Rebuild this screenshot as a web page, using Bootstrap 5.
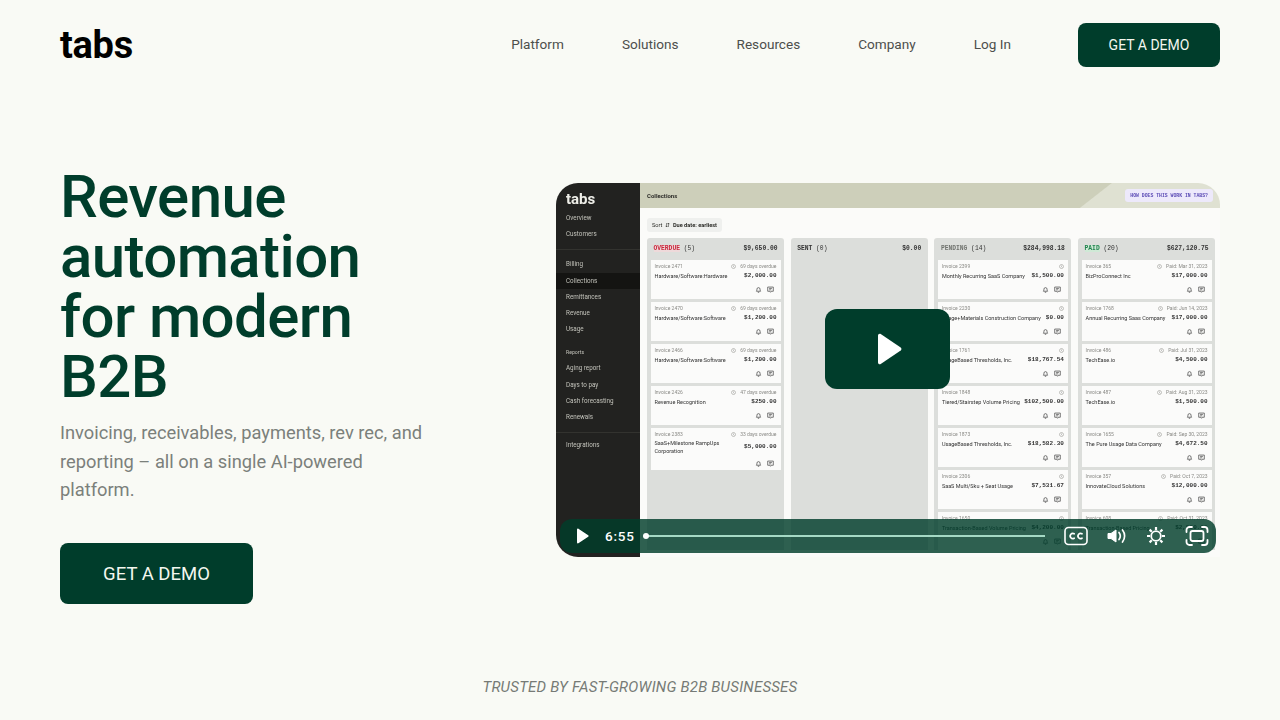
<!DOCTYPE html>
<html lang="en">
  <head>
    <meta charset="UTF-8" />
    <meta name="viewport" content="width=device-width, initial-scale=1.0" />
    <title>Tabs</title>
    <link rel="stylesheet" href="https://cdn.jsdelivr.net/npm/bootstrap@5.3.0/dist/css/bootstrap.min.css" />
    <style>
      body { background: #f9faf5; font-family: Roboto, "Liberation Sans", Arial, sans-serif; overflow: hidden; }
      .site-nav { padding: 23px 60px 0; height: 67px; }
      .site-logo { font: 700 38px/1 Roboto, sans-serif; color: #000; letter-spacing: -0.3px; text-decoration: none; padding: 0; margin: 0; }
      .site-links { gap: 58px; margin-right: 67px; }
      .site-links a { font: 13.6px/1 Roboto, sans-serif; color: #4d4f4c; text-decoration: none; padding: 0; }
      .btn-tabs { background: #003d2b; color: #f4f7ef; border: 0; border-radius: 8px; font-family: Roboto, sans-serif; }
      .btn-tabs:hover { background: #003d2b; color: #f4f7ef; }
      .btn-sm-tabs { width: 142px; height: 44px; font-size: 14px; }
      .btn-lg-tabs { width: 193px; height: 61px; font-size: 18.5px; padding-top: 10px; }
      .hero-wrap { padding: 100px 60px 0; }
      .hero-left { width: 400px; }
      .hero-title { font: 500 60px/60px Roboto, sans-serif; color: #003d2b; margin: 0; letter-spacing: -0.6px; max-width: 340px; }
      .hero-sub { font: 18.3px/28.6px Roboto, sans-serif; color: #7b807b; margin: 12px 0 38px; width: 380px; }
      .trust-line { font: italic 15px/1 Roboto, sans-serif; letter-spacing: 0.22px; color: #767a76; position: absolute; left: 0; right: 0; top: 680px; }

      .vid-frame { position: relative; width: 664px; height: 374px; margin-top: 16px; border-radius: 22px 22px 0 22px; overflow: hidden; background: #fbfbf9; font-family: Roboto, "Liberation Sans", sans-serif; }
      .vid-soft { filter: blur(0.4px); }
      .vid-side { width: 84px; background: #222220; color: #c2c2ba; font-size: 6.3px; flex: none; }
      .vid-logo { font: 700 15px/1 Roboto, sans-serif; color: #eeeee8; padding: 9px 10px 0; height: 27px; }
      .vid-item { height: 16.2px; line-height: 16.2px; padding-left: 10px; }
      .vid-sec { height: 15px; line-height: 15px; font-size: 5.2px; margin-top: 8px; }
      .vid-on { background: #141412; }
      .vid-rule { height: 1px; background: #33332f; margin: 7px 0 6px; }
      .vid-head { height: 25px; background: linear-gradient(142deg, #cdcfba 290px, #dfe1d2 291px); padding: 0 7px; font-size: 6px; font-weight: 700; color: #2c2c28; }
      .vid-help { background: #ede9fb; color: #5b4bb5; font: 700 4.8px/13px "Liberation Mono", monospace; padding: 0 5px; border-radius: 3px; height: 13px; }
      .vid-sort { margin: 10px 0 6px 7px; width: 75px; height: 14px; background: #eff0ee; border-radius: 3px; font-size: 5.6px; line-height: 14px; padding-left: 5px; color: #2c2c28; }
      .vid-board { gap: 6.7px; padding-left: 7px; }
      .vid-col { width: 137px; height: 312px; overflow: hidden; background: #dcdedb; border-radius: 3px 3px 0 0; flex: none; }
      .vid-colhead { height: 22px; padding: 0 6.5px; font: 700 6.3px/22px "Liberation Mono", monospace; color: #333; }
      .vid-colhead span { font-weight: 400; }
      .tag-over { color: #c8273c; background: #eed9da; font-weight: 700 !important; }
      .tag-pend { color: #71746f; font-weight: 700 !important; }
      .tag-paid { color: #23834f; background: #cfe9d6; font-weight: 700 !important; }
      .vid-card { background: #fbfbfa; margin: 0 3.5px 3px; padding: 2px 4px 2px; min-height: 39px; color: #333; }
      .vid-top { font-size: 5px; line-height: 8px; color: #8a8a86; }
      .vid-name { font-size: 5.5px; line-height: 8.4px; }
      .vid-amt { font: 700 6px/8px "Liberation Mono", monospace; white-space: nowrap; flex: none; }
      .vid-mid { min-height: 10px; gap: 3px; margin-top: 1px; }
      .vid-icons { gap: 5px; height: 9px; margin-top: 3.5px; padding-right: 2.5px; }
      .vid-icons svg { width: 7px; height: 7px; }

      .play-big { position: absolute; left: 269px; top: 126px; width: 125px; height: 80px; background: #003d2b; border-radius: 12px; }
      .ctl-bar { position: absolute; left: 4px; top: 336px; width: 656px; height: 34px; background: rgba(0, 61, 43, 0.82); border-radius: 12px; color: #fff; }
      .ctl-time { position: absolute; left: 45px; top: 0; font: 500 13.5px/34px Roboto, sans-serif; letter-spacing: 0.8px; }
      .ctl-track { position: absolute; left: 86px; top: 16px; width: 399px; height: 2px; background: #a5d9c5; }
      .ctl-dot { position: absolute; left: 83px; top: 14px; width: 6px; height: 6px; border-radius: 50%; background: #fff; }
      .ctl-icon { position: absolute; top: 0; height: 34px; }
    </style>
  </head>
  <body>
    <nav class="navbar site-nav d-flex justify-content-between align-items-center">
      <a class="site-logo" href="#">tabs</a>
      <div class="d-flex align-items-center">
        <div class="d-flex align-items-center site-links">
          <a href="#">Platform</a>
          <a href="#">Solutions</a>
          <a href="#">Resources</a>
          <a href="#">Company</a>
          <a href="#">Log In</a>
        </div>
        <a class="btn btn-tabs btn-sm-tabs d-flex align-items-center justify-content-center" href="#">GET A DEMO</a>
      </div>
    </nav>

    <main class="hero-wrap d-flex justify-content-between align-items-start">
      <div class="hero-left">
        <h1 class="hero-title">Revenue automation for modern B2B</h1>
        <p class="hero-sub">Invoicing, receivables, payments, rev rec, and reporting – all on a single AI-powered platform.</p>
        <a class="btn btn-tabs btn-lg-tabs d-flex align-items-center justify-content-center" href="#">GET A DEMO</a>
      </div>

      <div class="vid-frame d-flex">
        <aside class="vid-side vid-soft">
          <div class="vid-logo">tabs</div>
          <div class="vid-item">Overview</div>
          <div class="vid-item">Customers</div>
          <div class="vid-rule"></div>
          <div class="vid-item">Billing</div>
          <div class="vid-item vid-on">Collections</div>
          <div class="vid-item">Remittances</div>
          <div class="vid-item">Revenue</div>
          <div class="vid-item">Usage</div>
          <div class="vid-item vid-sec">Reports</div>
          <div class="vid-item">Aging report</div>
          <div class="vid-item">Days to pay</div>
          <div class="vid-item">Cash forecasting</div>
          <div class="vid-item">Renewals</div>
          <div class="vid-rule mb-1"></div>
          <div class="vid-item">Integrations</div>
        </aside>
        <div class="flex-grow-1 vid-soft">
          <div class="vid-head d-flex justify-content-between align-items-center">
            <span>Collections</span>
            <span class="vid-help">HOW DOES THIS WORK IN TABS?</span>
          </div>
          <div class="vid-sort">Sort &nbsp;⇵&nbsp; <b>Due date: earliest</b></div>
          <div class="vid-board d-flex" id="board"></div>
        </div>

        <div class="play-big d-flex align-items-center justify-content-center">
          <svg class="ms-1" width="27" height="34" viewBox="0 0 27 34"><path d="M2 3.500v27c0 1.400 1.500 2.200 2.700 1.500l20-13.500c1-.7 1-2.300 0-3L4.700 2C3.500 1.300 2 2.100 2 3.500z" fill="#fff"/></svg>
        </div>

        <div class="ctl-bar">
          <svg class="ctl-icon" style="left: 16px" width="13" height="34" viewBox="0 0 13 34"><path d="M1 10.500v13c0 .8.800 1.200 1.400.8l9.800-6.500c.5-.4.5-1.200 0-1.600L2.400 9.700C1.800 9.300 1 9.700 1 10.500z" fill="#fff"/></svg>
          <span class="ctl-time">6:55</span>
          <div class="ctl-track"></div>
          <div class="ctl-dot"></div>
          <svg class="ctl-icon" style="left: 504px" width="24" height="34" viewBox="0 0 24 34" fill="none" stroke="#fff"><rect x="1" y="8.500" width="22" height="17" rx="3.500" stroke-width="1.600"/><path d="M10.200 14.800a2.600 2.600 0 1 0 0 4.400M18 14.800a2.600 2.600 0 1 0 0 4.400" stroke-width="1.700" stroke-linecap="round"/></svg>
          <svg class="ctl-icon" style="left: 547px" width="20" height="34" viewBox="0 0 20 34" fill="none" stroke="#fff"><path d="M1 14.500h3l5-3.500v12l-5-3.500H1z" fill="#fff" stroke-linejoin="round"/><path d="M12 13.500c1.500 2 1.500 5 0 7M15.500 11c2.800 3.500 2.800 8.500 0 12" stroke-width="1.700" stroke-linecap="round"/></svg>
          <svg class="ctl-icon" style="left: 586px" width="20" height="34" viewBox="0 0 20 34" fill="none" stroke="#fff"><circle cx="10" cy="17" r="4.800" stroke-width="1.800"/><path d="M10 8v3M10 23v3M1 17h3M16 17h3M3.600 10.600l2.200 2.200M14.200 21.200l2.200 2.200M3.600 23.400l2.200-2.200M14.200 12.800l2.200-2.200" stroke-width="2.200"/></svg>
          <svg class="ctl-icon" style="left: 625px" width="24" height="34" viewBox="0 0 24 34" fill="none" stroke="#fff" stroke-width="1.800"><path d="M1.500 13v-2a3 3 0 0 1 3-3h2.500M17 8h2.500a3 3 0 0 1 3 3v2M22.500 21v2a3 3 0 0 1-3 3H17M7 26H4.500a3 3 0 0 1-3-3v-2" stroke-linecap="round"/><rect x="5.500" y="12" width="13" height="10" rx="2"/></svg>
        </div>
      </div>
    </main>

    <p class="trust-line text-center m-0">TRUSTED BY FAST-GROWING B2B BUSINESSES</p>

    <script>
      const board = document.getElementById("board");

      const columns = [
        { tag: "OVERDUE", tagClass: "tag-over", count: 5, total: "$9,650.00", cards: [
          ["Invoice 2471", "69 days overdue", "Hardware/Software:Hardware", "$2,000.00"],
          ["Invoice 2470", "69 days overdue", "Hardware/Software:Software", "$1,200.00"],
          ["Invoice 2466", "69 days overdue", "Hardware/Software:Software", "$1,200.00"],
          ["Invoice 2426", "47 days overdue", "Revenue Recognition", "$250.00"],
          ["Invoice 2383", "33 days overdue", "SaaS+Milestone RampUps Corporation", "$5,000.00"],
        ] },
        { tag: "SENT", tagClass: "", count: 0, total: "$0.00", cards: [] },
        { tag: "PENDING", tagClass: "tag-pend", count: 14, total: "$284,998.18", cards: [
          ["Invoice 2399", "", "Monthly Recurring SaaS Company", "$1,500.00"],
          ["Invoice 2230", "", "Usage+Materials Construction Company", "$0.00"],
          ["Invoice 1761", "", "UsageBased Thresholds, Inc.", "$18,767.54"],
          ["Invoice 1848", "", "Tiered/Stairstep Volume Pricing", "$102,500.00"],
          ["Invoice 1873", "", "UsageBased Thresholds, Inc.", "$18,582.30"],
          ["Invoice 2306", "", "SaaS Multi/Sku + Seat Usage", "$7,531.67"],
          ["Invoice 1650", "", "Transaction-Based Volume Pricing", "$4,200.00"],
        ] },
        { tag: "PAID", tagClass: "tag-paid", count: 20, total: "$627,120.75", cards: [
          ["Invoice 365", "Paid: Mar 31, 2023", "BizProConnect Inc", "$17,000.00"],
          ["Invoice 1768", "Paid: Jun 14, 2023", "Annual Recurring Saas Company", "$17,000.00"],
          ["Invoice 486", "Paid: Jul 31, 2023", "TechEase.io", "$4,500.00"],
          ["Invoice 487", "Paid: Aug 31, 2023", "TechEase.io", "$1,500.00"],
          ["Invoice 1655", "Paid: Sep 30, 2023", "The Pure Usage Data Company", "$4,672.50"],
          ["Invoice 357", "Paid: Oct 7, 2023", "InnovateCloud Solutions", "$12,000.00"],
          ["Invoice 608", "Paid: Oct 31, 2023", "Transaction-Based Pricing", "$2,500.00"],
        ] },
      ];

      const clock = `<svg width="5" height="5" viewBox="0 0 10 10" fill="none" stroke="#8a8a86"><circle cx="5" cy="5" r="4"/><path d="M5 3v2.500l1.500 1"/></svg>`;
      const bell = `<svg viewBox="0 0 10 10" fill="none" stroke="#444"><path d="M2 7.500c.8-1 .8-2 .8-3a2.200 2.200 0 0 1 4.400 0c0 1 0 2 .8 3zM4 9h2"/></svg>`;
      const chat = `<svg viewBox="0 0 10 10" fill="none" stroke="#444"><path d="M1 1.500h8v6H6L5 9 4 7.500H1zM3 3.500h4M3 5.500h3"/></svg>`;

      // Builds one invoice card of a column
      function createCard(card, noWrap) {
        return `
          <div class="vid-card">
            <div class="vid-top d-flex justify-content-between">
              <span>${card[0]}</span>
              <span class="d-flex align-items-center gap-1">${clock}${card[1]}</span>
            </div>
            <div class="vid-mid d-flex justify-content-between align-items-center">
              <div class="vid-name ${noWrap ? "text-nowrap" : ""}">${card[2]}</div>
              <div class="vid-amt">${card[3]}</div>
            </div>
            <div class="vid-icons d-flex justify-content-end align-items-center">${bell}${chat}</div>
          </div>`;
      }

      columns.forEach((col) => {
        const el = document.createElement("div");
        el.classList.add("vid-col");
        el.innerHTML = `
          <div class="vid-colhead d-flex justify-content-between">
            <div><b class="${col.tagClass}">${col.tag}</b> <span>(${col.count})</span></div>
            <div>${col.total}</div>
          </div>
          ${col.cards.map((c) => createCard(c, col.tag !== "OVERDUE")).join("")}`;
        board.appendChild(el);
      });
    </script>
    <script src="https://cdn.jsdelivr.net/npm/bootstrap@5.3.0/dist/js/bootstrap.bundle.min.js"></script>
  </body>
</html>
